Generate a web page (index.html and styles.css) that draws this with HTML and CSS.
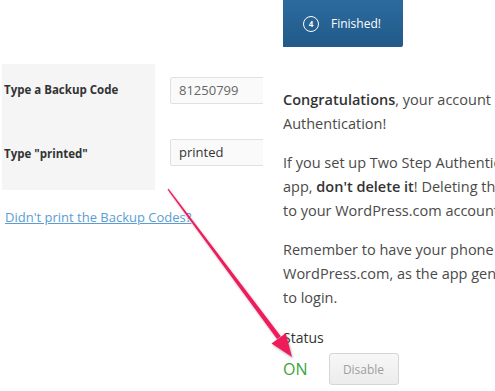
FILE: index.html
```html
<!DOCTYPE html>
<html>
<head>
<meta charset="utf-8">
<link rel="stylesheet" href="styles.css">
</head>
<body>
<div class="page">
  <div class="left">
    <div class="form">
      <div class="label r1">Type a Backup Code</div>
      <div class="field r1"><div class="input muted">81250799</div></div>
      <div class="label r2">Type "printed"</div>
      <div class="field r2"><div class="input">printed</div></div>
    </div>
    <a class="link" href="#">Didn't print the Backup Codes?</a>
  </div>
  <div class="right">
    <div class="step">
      <span class="num">4</span>
      <span class="step-label">Finished!</span>
    </div>
    <p class="para"><b>Congratulations</b>, your account is now protected by Two Step<br>Authentication!</p>
    <p class="para">If you set up Two Step Authentication using an authenticator<br>app, <b>don't delete it</b>! Deleting the app will lock you out<br>to your WordPress.com account.</p>
    <p class="para">Remember to have your phone with you when you log in to<br>WordPress.com, as the app generates the codes you need<br>to login.</p>
    <div class="status-label">Status</div>
    <div class="status-row">
      <span class="on">ON</span>
      <span class="btn">Disable</span>
    </div>
  </div>
</div>
<svg class="arrow" width="495" height="391" viewBox="0 0 495 391">
  <defs>
    <filter id="sh" x="-20%" y="-20%" width="140%" height="140%">
      <feDropShadow dx="1" dy="1.5" stdDeviation="1" flood-color="#000" flood-opacity="0.3"/>
    </filter>
  </defs>
  <g filter="url(#sh)" fill="#ef1a5c">
    <polygon points="167.5,189.5 168.5,188.8 280.8,336.2 277,339"/>
    <polygon points="292,357 271.5,343.6 285.7,333.2"/>
  </g>
</svg>
</body>
</html>
```
FILE: styles.css
```css
html, body {
  margin: 0;
  padding: 0;
}
body {
  width: 495px;
  height: 391px;
  overflow: hidden;
  background: #fff;
  font-family: "Open Sans", "Liberation Sans", sans-serif;
  color: #444;
  position: relative;
}
.page {
  display: flex;
  width: 495px;
  overflow: hidden;
}
.left {
  width: 283px;
  flex: none;
  padding-top: 64px;
  padding-left: 2px;
  box-sizing: border-box;
}
.form {
  display: grid;
  grid-template-columns: 153px 93px;
  grid-template-rows: 63px 63px;
  column-gap: 15px;
}
.label {
  background: #f5f5f5;
  font-size: 11.5px;
  font-weight: 700;
  color: #333;
  padding-left: 2px;
  line-height: 25px;
}
.label.r1 { padding-top: 13px; }
.label.r2 { padding-top: 14px; }
.field {
  overflow: hidden;
}
.field.r1 { padding-top: 13px; }
.field.r2 { padding-top: 12px; }
.input {
  width: 130px;
  height: 27px;
  box-sizing: border-box;
  border: 1px solid #e1e1e1;
  border-radius: 2px;
  background: #fafafa;
  font-size: 13px;
  line-height: 25px;
  padding-left: 8px;
  color: #333;
}
.input.muted { color: #666; }
.link {
  display: block;
  margin-top: 17px;
  margin-left: 3px;
  font-size: 13px;
  line-height: 20px;
  color: #5b9dd3;
  text-decoration: underline;
  white-space: nowrap;
}
.right {
  flex: 1;
  min-width: 0;
  overflow: hidden;
}
.step {
  width: 121px;
  height: 47px;
  margin-left: -1px;
  box-sizing: border-box;
  background: linear-gradient(#2c6a9e, #215a88);
  border-radius: 0 0 2px 2px;
  display: flex;
  align-items: center;
  padding-left: 21px;
  gap: 12px;
  color: #fff;
}
.num {
  width: 14px;
  height: 14px;
  border: 1.5px solid #fff;
  border-radius: 50%;
  font-size: 8px;
  font-weight: 700;
  line-height: 14px;
  text-align: center;
  flex: none;
}
.step-label {
  font-size: 12px;
}
.para {
  margin: 41px 0 0;
  font-size: 14.5px;
  line-height: 24px;
  white-space: nowrap;
  color: #4a4a4a;
}
.para + .para {
  margin-top: 15px;
}
.para b {
  font-weight: 600;
  color: #333;
}
.status-label {
  margin-top: 16px;
  font-size: 14px;
  line-height: 24px;
  color: #333;
}
.status-row {
  margin-top: 3px;
  display: flex;
  align-items: center;
  gap: 21px;
}
.on {
  font-size: 16px;
  color: #3aa33a;
}
.btn {
  width: 70px;
  height: 32px;
  box-sizing: border-box;
  border: 1px solid #d5d5d5;
  border-radius: 3px;
  background: linear-gradient(#f7f7f7, #ececec);
  font-size: 12px;
  color: #a0a0a0;
  display: flex;
  align-items: center;
  justify-content: center;
}
.arrow {
  position: absolute;
  left: 0;
  top: 0;
  pointer-events: none;
}
```
